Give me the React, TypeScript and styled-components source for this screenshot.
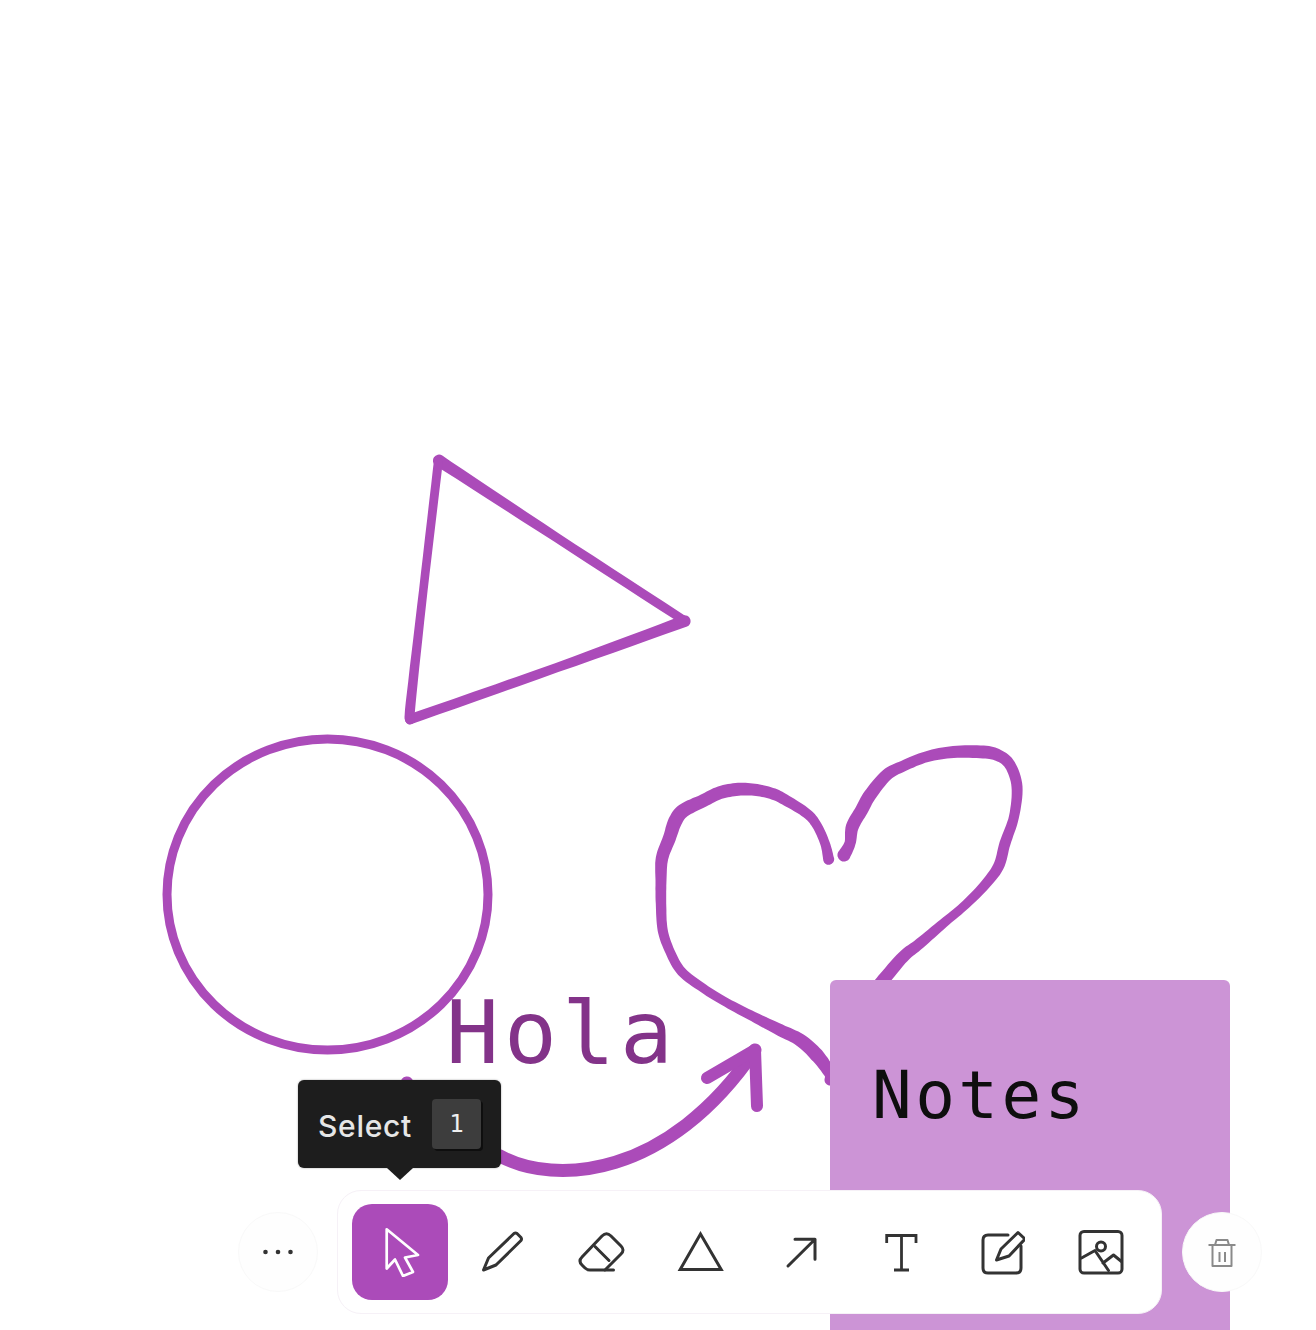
import React from "react";
import styled, { createGlobalStyle } from "styled-components";

const PURPLE = "#ab4bb9";
type Pt = [number, number, number];

/* Turns a list of pen samples (x, y, width) into the outline of a freehand stroke. */
function freehand(pts: Pt[]): string {
  const s: Pt[] = [];
  const at = (i: number) => pts[Math.max(0, Math.min(pts.length - 1, i))];
  for (let i = 0; i < pts.length - 1; i++) {
    const [a, b, c, d] = [at(i - 1), at(i), at(i + 1), at(i + 2)];
    for (let k = 0; k < 8; k++) {
      const t = k / 8;
      const q = (j: number) =>
        0.5 * (2 * b[j] + (c[j] - a[j]) * t + (2 * a[j] - 5 * b[j] + 4 * c[j] - d[j]) * t * t + (3 * b[j] - a[j] - 3 * c[j] + d[j]) * t * t * t);
      s.push([q(0), q(1), b[2] + (c[2] - b[2]) * t]);
    }
  }
  s.push(pts[pts.length - 1]);
  const left: string[] = [];
  const right: string[] = [];
  s.forEach((p, i) => {
    const n = s[Math.min(i + 1, s.length - 1)];
    const m = s[Math.max(i - 1, 0)];
    const dx = n[0] - m[0];
    const dy = n[1] - m[1];
    const l = Math.hypot(dx, dy) || 1;
    const ox = (-dy / l) * (p[2] / 2);
    const oy = (dx / l) * (p[2] / 2);
    left.push(`${(p[0] + ox).toFixed(1)} ${(p[1] + oy).toFixed(1)}`);
    right.unshift(`${(p[0] - ox).toFixed(1)} ${(p[1] - oy).toFixed(1)}`);
  });
  const r0 = (s[s.length - 1][2] / 2).toFixed(1);
  const r1 = (s[0][2] / 2).toFixed(1);
  return `M${left.join("L")}A${r0} ${r0} 0 0 0 ${right[0]}L${right.join("L")}A${r1} ${r1} 0 0 0 ${left[0]}Z`;
}

const z = (x: number, y: number, w: number): Pt => [640 + x / 3, 730 + y / 3, w];
const t = (x: number, y: number, w: number): Pt => [390 + x / 3, 440 + y / 3, w];

const heartLeft: Pt[] = [
  z(566, 388, 11), z(555, 340, 9.5), z(530, 285, 9.5), z(500, 250, 10), z(440, 212, 11), z(400, 192, 11.5),
  z(350, 180, 12), z(295, 178, 13), z(240, 188, 13), z(190, 212, 13), z(130, 242, 14), z(105, 275, 14),
  z(88, 325, 13), z(66, 385, 12.5), z(63, 450, 11), z(63, 520, 10.5), z(68, 600, 10), z(90, 665, 9.5),
  z(125, 725, 9.5), z(190, 775, 9), z(260, 818, 9), z(340, 860, 10), z(420, 900, 12), z(480, 930, 13),
  z(530, 975, 14), z(570, 1030, 12), z(570, 1050, 11),
];
const heartRight: Pt[] = [
  z(612, 375, 13), z(630, 340, 11), z(637, 290, 13), z(665, 240, 13), z(690, 195, 13), z(740, 135, 12),
  z(790, 108, 11), z(860, 80, 11), z(940, 66, 12), z(1030, 66, 13), z(1075, 76, 12), z(1110, 105, 11),
  z(1131, 170, 11), z(1122, 260, 10), z(1095, 340, 11), z(1075, 410, 11), z(1030, 470, 10), z(970, 530, 9),
  z(910, 580, 9.5), z(840, 640, 11), z(790, 680, 12), z(730, 750, 13), z(710, 775, 13),
];
const triangleEdges: Pt[][] = [
  [t(147, 62, 12), t(500, 293, 9.5), t(885, 543, 9)],
  [t(885, 543, 12), t(500, 683, 9.5), t(60, 838, 10)],
  [t(60, 838, 10), t(62, 790, 10), t(100, 450, 8.5), t(145, 65, 9)],
];

const GlobalStyle = createGlobalStyle`
  html, body { margin: 0; padding: 0; background: #fff; }
  #root { width: 1316px; height: 1330px; }
`;

const Page = styled.div`
  position: relative;
  width: 1316px;
  height: 1330px;
  overflow: hidden;
  background: #fff;
`;

const Drawing = styled.svg`
  position: absolute;
  inset: 0;
`;

const HolaText = styled.div`
  position: absolute;
  left: 446px;
  top: 979px;
  font: 400 88px/108px "DejaVu Sans Mono", monospace;
  letter-spacing: 5px;
  color: #833389;
`;

const StickyNote = styled.div`
  position: absolute;
  left: 830px;
  top: 980px;
  width: 400px;
  height: 360px;
  box-sizing: border-box;
  padding: 76px 42px;
  border-radius: 6px 6px 0 0;
  background: #cc94d6;
  font: 400 66px/80px "DejaVu Sans Mono", monospace;
  letter-spacing: 3.4px;
  color: #0e0e0e;
`;

const BottomBar = styled.div`
  position: absolute;
  left: 238px;
  bottom: 16px;
  display: flex;
  align-items: center;
  gap: 19px;
`;

const RoundButton = styled.button`
  width: 80px;
  height: 80px;
  padding: 0;
  display: flex;
  align-items: center;
  justify-content: center;
  border: 1px solid #f9f9f9;
  border-radius: 50%;
  background: #fefefe;
`;

const Toolbar = styled.div`
  display: flex;
  gap: 4px;
  margin-right: 1px;
  padding: 13px 13px 13px 14px;
  border: 1px solid #f6f1f7;
  border-radius: 24px;
  background: #fff;
`;

const ToolButton = styled.button<{ $active?: boolean }>`
  position: relative;
  width: 96px;
  height: 96px;
  padding: 0;
  display: flex;
  align-items: center;
  justify-content: center;
  border: 0;
  border-radius: 20px;
  background: ${(p) => (p.$active ? PURPLE : "transparent")};
`;

const Tooltip = styled.div`
  position: absolute;
  left: -54px;
  bottom: 132px;
  width: 203px;
  height: 88px;
  box-sizing: border-box;
  padding: 0 20px;
  display: flex;
  align-items: center;
  justify-content: space-between;
  border-radius: 6px;
  background: #1d1d1d;
  box-shadow: 0 0 2px rgba(0, 0, 0, 0.4);
  &::after {
    content: "";
    position: absolute;
    left: 50%;
    top: 88px;
    margin-left: -13px;
    border: 13px solid transparent;
    border-top: 12px solid #1d1d1d;
    border-bottom: 0;
  }
`;

const TooltipLabel = styled.span`
  margin-top: 3px;
  font: 500 30px/32px "Inter", sans-serif;
  letter-spacing: 0.7px;
  color: #e6e6e6;
`;

const KeyCap = styled.span`
  width: 49px;
  height: 50px;
  display: flex;
  align-items: center;
  justify-content: center;
  border-radius: 4px;
  background: #3d3d3d;
  box-shadow: 2px 2px 0 #0e0e0e;
  font: 400 24px/28px "DejaVu Sans Mono", monospace;
  color: #f0f0f0;
`;

const ToolIcon = styled.svg<{ $color?: string; $weight?: number; $sharp?: boolean }>`
  width: 50px;
  height: 50px;
  fill: none;
  stroke: ${(p) => p.$color ?? "#333"};
  stroke-width: ${(p) => p.$weight ?? 3};
  stroke-linejoin: ${(p) => (p.$sharp ? "miter" : "round")};
  stroke-linecap: ${(p) => (p.$sharp ? "butt" : "round")};
`;

const SmallIcon = styled.svg`
  width: 32px;
  height: 32px;
  fill: none;
  stroke: #8a8a8a;
  stroke-width: 2;
  stroke-linejoin: round;
`;

const Dots = styled.svg`
  width: 32px;
  height: 8px;
  fill: #333;
`;

export default function App() {
  return (
    <Page>
      <GlobalStyle />
      <Drawing width="1316" height="1330" viewBox="0 0 1316 1330">
        {triangleEdges.map((edge, i) => (
          <path key={i} d={freehand(edge)} fill={PURPLE} />
        ))}
        <g fill="none" stroke={PURPLE} strokeLinecap="round" strokeLinejoin="round">
          <ellipse cx="327.5" cy="894.5" rx="160.5" ry="155.5" strokeWidth="9" />
          <path d="M407 1083 C412 1118 450 1140 500 1156 C555 1186 668 1178 755 1050" strokeWidth="13" />
          <path d="M707 1078 L755 1050 L757 1106" strokeWidth="12" />
        </g>
        <path d={freehand(heartLeft)} fill={PURPLE} />
        <path d={freehand(heartRight)} fill={PURPLE} />
      </Drawing>
      <HolaText>Hola</HolaText>
      <StickyNote>Notes</StickyNote>
      <BottomBar>
        <RoundButton aria-label="More">
          <Dots viewBox="0 0 32 8">
            <circle cx="3.5" cy="4" r="2.3" />
            <circle cx="16" cy="4" r="2.3" />
            <circle cx="28.5" cy="4" r="2.3" />
          </Dots>
        </RoundButton>
        <Toolbar>
          <ToolButton $active aria-label="Select">
            <Tooltip>
              <TooltipLabel>Select</TooltipLabel>
              <KeyCap>1</KeyCap>
            </Tooltip>
            <ToolIcon viewBox="0 0 50 50" $color="#fff" $weight={2.7}>
              <path d="M11.7 2.3 L43 28 L30 30.5 L38 45 L28 49 L20 32.5 L11.7 41.5 Z" />
            </ToolIcon>
          </ToolButton>
          <ToolButton aria-label="Draw">
            <ToolIcon viewBox="0 0 50 50">
              <path d="M8.5 43 L13.5 31 L39 6.5 Q40.5 5.5 42 6.5 L46 10.5 Q47 12 46 13.5 L21 38 Z" />
            </ToolIcon>
          </ToolButton>
          <ToolButton aria-label="Eraser">
            <ToolIcon viewBox="0 0 50 50">
              <path d="M27 9 Q31.5 4.5 36 9 L46 19 Q50 23 46 27 L30 43 H15 Q12 43 10 41 L7 38 Q3 34 7 30 Z" />
              <path d="M20 19.5 L34 33.5 M30 43 H38.5" />
            </ToolIcon>
          </ToolButton>
          <ToolButton aria-label="Shape">
            <ToolIcon viewBox="0 0 50 50" $sharp>
              <path d="M25.5 7 L5.2 42.5 H46.2 Z" />
            </ToolIcon>
          </ToolButton>
          <ToolButton aria-label="Arrow">
            <ToolIcon viewBox="0 0 50 50">
              <path d="M13 39 L40 12.3 M20 12.3 H40 V32.3" />
            </ToolIcon>
          </ToolButton>
          <ToolButton aria-label="Text">
            <ToolIcon viewBox="0 0 50 50" $weight={2.8} $sharp>
              <path d="M11.7 16 V8.5 H41 V16 M26.5 8.5 V43 M19 43 H34" />
            </ToolIcon>
          </ToolButton>
          <ToolButton aria-label="Note">
            <ToolIcon viewBox="0 0 50 50">
              <path d="M33 8 H13 Q8 8 8 13 V41 Q8 46 13 46 H41 Q46 46 46 41 V19" />
              <path d="M21.5 33 L26 22 L43 5.5 L50 12 L34 29 Z" />
            </ToolIcon>
          </ToolButton>
          <ToolButton aria-label="Image">
            <ToolIcon viewBox="0 0 50 50">
              <rect x="5" y="4.5" width="42" height="41.5" rx="4" />
              <circle cx="26" cy="19.5" r="4.5" />
              <path d="M6.5 31 L20 23.5 L33.5 43.5 M28 36 L38.5 28 L46.5 34.5" />
            </ToolIcon>
          </ToolButton>
        </Toolbar>
        <RoundButton aria-label="Delete">
          <SmallIcon viewBox="0 0 32 32">
            <path d="M2.5 9 H29.5 M6.5 9 V30 H25.5 V9 M9 9 L10.5 4 H21.5 L23 9 M13.5 16 V26 M19 16 V26" />
          </SmallIcon>
        </RoundButton>
      </BottomBar>
    </Page>
  );
}
